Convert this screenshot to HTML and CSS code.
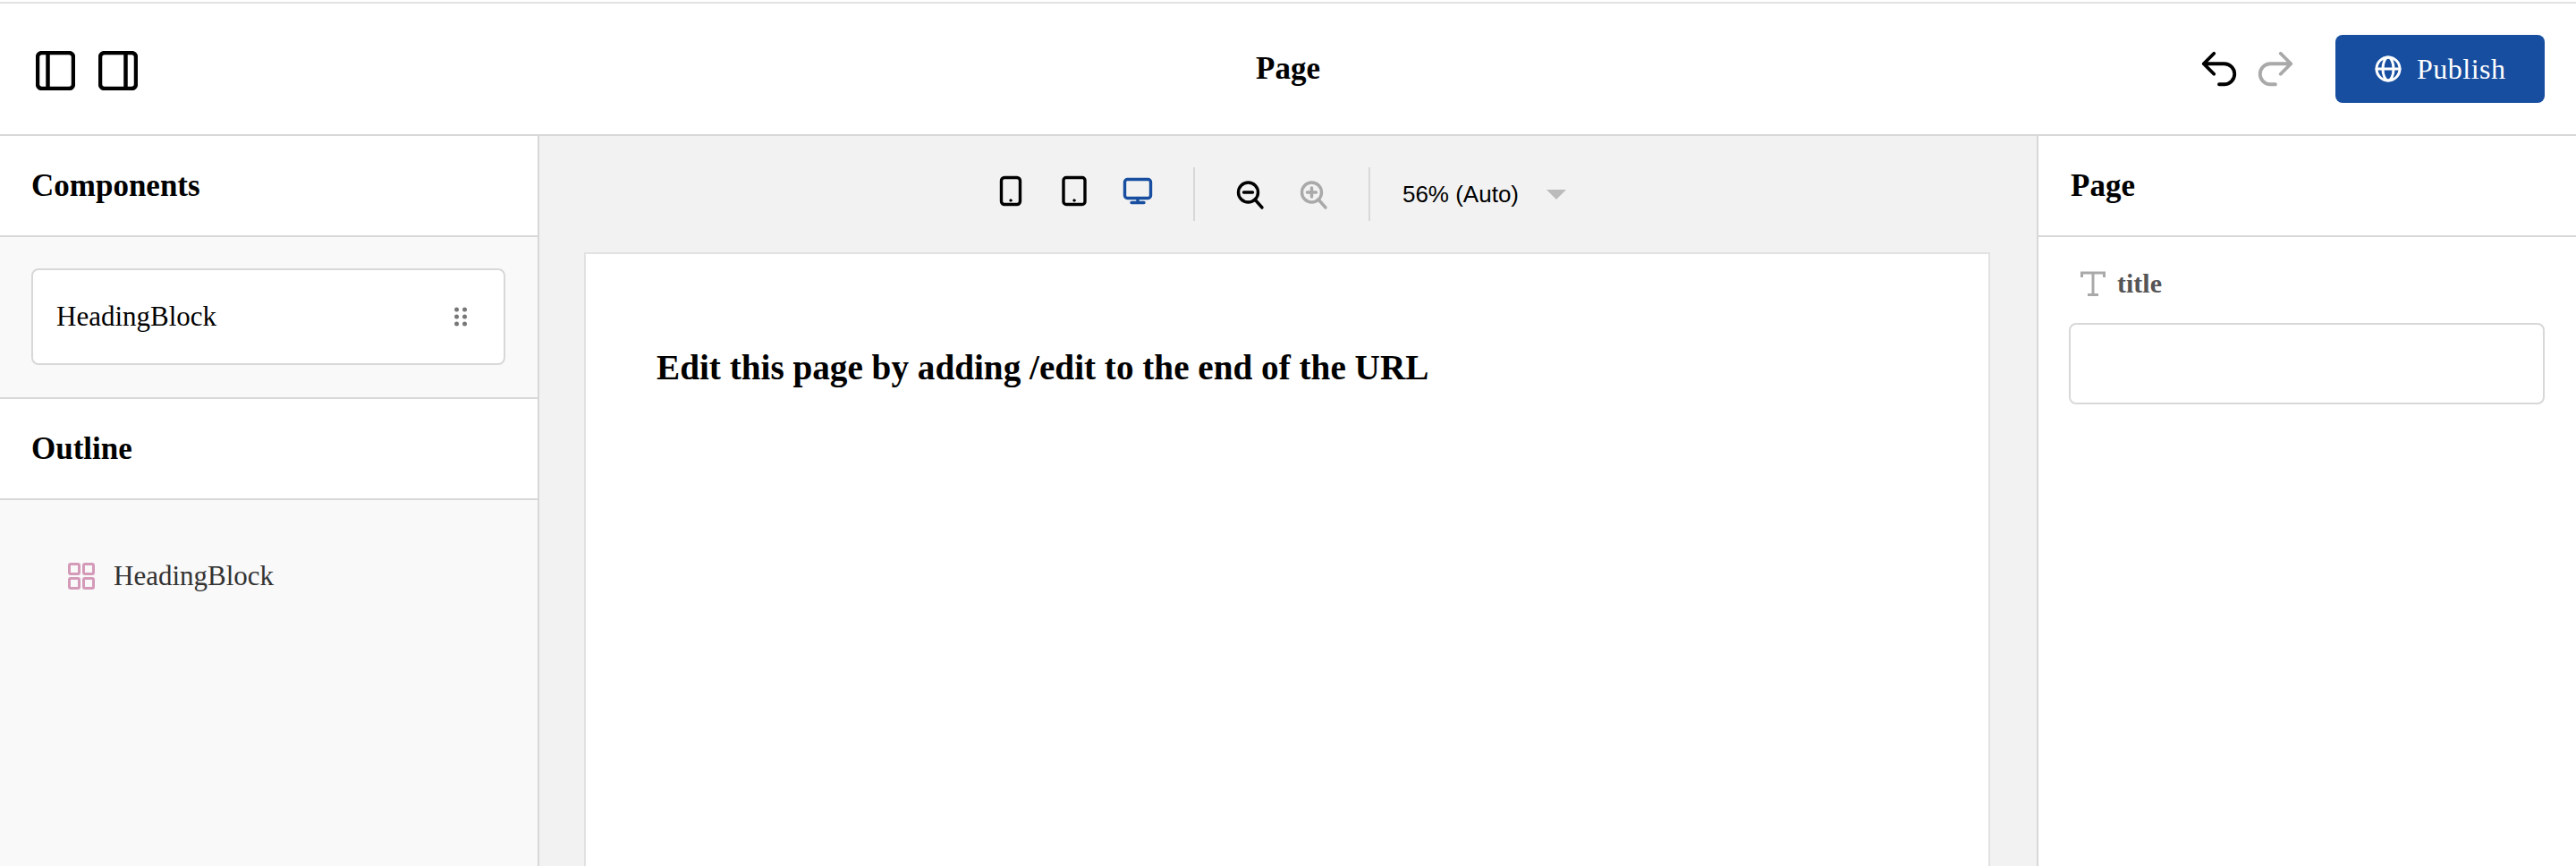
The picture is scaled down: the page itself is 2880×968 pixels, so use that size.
FILE: index.html
```
<!DOCTYPE html>
<html lang="en">
<head>
<meta charset="utf-8">
<title>Page</title>
<link rel="stylesheet" href="styles.css">
</head>
<body>
<div class="app">
  <header class="topbar">
    <div class="topbar-left">
      <button class="panel-btn" aria-label="Toggle left"><svg width="44" height="44" viewBox="0 0 44 44" class="ico-black"><rect x="2" y="2" width="40" height="40" rx="5"/><path d="M13.5 2v40"/></svg></button>
      <button class="panel-btn" aria-label="Toggle right"><svg width="44" height="44" viewBox="0 0 44 44" class="ico-black"><rect x="2" y="2" width="40" height="40" rx="5"/><path d="M30.5 2v40"/></svg></button>
    </div>
    <div class="topbar-title">Page</div>
    <div class="topbar-right">
      <svg class="ico-black history" width="46" height="46" viewBox="0 0 24 24"><path d="M9 15 3 9m0 0 6-6M3 9h12a6 6 0 0 1 0 12h-3"/></svg>
      <svg class="ico-gray history" width="46" height="46" viewBox="0 0 24 24"><path d="M15 15l6-6m0 0-6-6m6 6H9a6 6 0 0 0 0 12h3"/></svg>
      <button class="publish">
        <svg class="ico-white" width="30" height="30" viewBox="0 0 30 30"><circle cx="15" cy="15" r="13"/><ellipse cx="15" cy="15" rx="6" ry="13"/><path d="M2 15h26"/></svg>
        <span>Publish</span>
      </button>
    </div>
  </header>
  <div class="workspace">
    <aside class="left">
      <h2 class="panel-head">Components</h2>
      <div class="components">
        <div class="card">
          <span>HeadingBlock</span>
          <svg class="dots" width="14" height="22" viewBox="0 0 14 22"><circle cx="2.5" cy="3" r="2.5"/><circle cx="11.5" cy="3" r="2.5"/><circle cx="2.5" cy="11" r="2.5"/><circle cx="11.5" cy="11" r="2.5"/><circle cx="2.5" cy="19" r="2.5"/><circle cx="11.5" cy="19" r="2.5"/></svg>
        </div>
      </div>
      <h2 class="panel-head panel-head-top">Outline</h2>
      <div class="outline">
        <div class="outline-row">
          <svg class="ico-pink" width="30" height="30" viewBox="0 0 30 30"><rect x="1.5" y="1.5" width="11" height="11" rx="1.5"/><rect x="17.5" y="1.5" width="11" height="11" rx="1.5"/><rect x="1.5" y="17.5" width="11" height="11" rx="1.5"/><rect x="17.5" y="17.5" width="11" height="11" rx="1.5"/></svg>
          <span>HeadingBlock</span>
        </div>
      </div>
    </aside>
    <main class="canvas">
      <div class="toolbar">
        <button class="tool"><svg class="ico-black thin" width="48" height="48" viewBox="0 0 48 48"><rect x="13.5" y="5.5" width="21" height="30" rx="3.5"/><circle class="dot" cx="24" cy="31" r="1.2"/></svg></button>
        <button class="tool"><svg class="ico-black thin" width="48" height="48" viewBox="0 0 48 48"><rect x="12" y="5.5" width="24" height="30" rx="3"/><circle class="dot" cx="24" cy="31" r="1.2"/></svg></button>
        <button class="tool"><svg class="ico-blue thin" width="48" height="48" viewBox="0 0 48 48"><rect x="9.5" y="7.5" width="29" height="21" rx="3"/><path d="M24 28.5v5M17 33.5h14"/></svg></button>
        <span class="divider"></span>
        <button class="tool"><svg class="ico-black thin" width="48" height="48" viewBox="0 0 48 48"><circle cx="22.5" cy="22" r="11"/><path d="M30 30l8 9M17.5 22h10"/></svg></button>
        <button class="tool"><svg class="ico-gray thin" width="48" height="48" viewBox="0 0 48 48"><circle cx="22.5" cy="22" r="11"/><path d="M30 30l8 9M17.5 22h10M22.5 17v10"/></svg></button>
        <span class="divider"></span>
        <div class="zoom-select"><span>56% (Auto)</span><span class="caret"></span></div>
      </div>
      <div class="page">
        <h1 class="page-heading">Edit this page by adding /edit to the end of the URL</h1>
      </div>
    </main>
    <aside class="right">
      <h2 class="panel-head">Page</h2>
      <div class="fields">
        <label class="field-label">
          <svg class="ico-tgray" width="28" height="28" viewBox="0 0 28 28"><path d="M1.5 7V2h25v5M14 2v24.5M8 26.5h12"/></svg>
          <span>title</span>
        </label>
        <div class="input"></div>
      </div>
    </aside>
  </div>
</div>
</body>
</html>
```
FILE: styles.css
```
* { box-sizing: border-box; }
html, body { margin: 0; height: 100%; background: #fff; }
body { overflow: hidden; font-family: "Liberation Serif", "Times New Roman", serif; color: #000; }
button { padding: 0; border: 0; background: none; font: inherit; color: inherit; display: flex; }
svg { display: block; fill: none; stroke-linecap: round; stroke-linejoin: round; }

.app { height: 968px; padding-top: 2px; display: flex; flex-direction: column; }
.topbar { height: 150px; flex: none; border-top: 2px solid #e2e2e2; border-bottom: 2px solid #d8d8d8; display: grid; grid-template-columns: 1fr auto 1fr; align-items: center; }
.topbar-left { display: flex; gap: 26px; padding: 4px 0 0 40px; }
.topbar-title { font-size: 35px; font-weight: 700; }
.topbar-right { display: flex; align-items: center; justify-content: flex-end; padding-right: 35px; }

.ico-black { stroke: #000; stroke-width: 4.5; }
.ico-gray { stroke: #a9a9a9; stroke-width: 4; }
.ico-white { stroke: #fff; stroke-width: 3; }
.ico-blue { stroke: #174ea0; stroke-width: 3; }
.ico-pink { stroke: #d49ab8; stroke-width: 3; }
.ico-tgray { stroke: #a9a9a9; stroke-width: 3; stroke-linecap: butt; stroke-linejoin: miter; }
.thin { stroke-width: 3.4; }
.history { stroke-width: 2; }
.history + .history { margin-left: 17px; }
.dot { fill: #000; stroke-width: 1; }
.dots { fill: #777; }

.publish { margin-left: 44px; width: 234px; height: 76px; border-radius: 8px; background: #174ea0; color: #fff; align-items: center; padding-left: 44px; gap: 17px; font-size: 32px; letter-spacing: 0.5px; }

.workspace { flex: 1; min-height: 0; display: grid; grid-template-columns: 603px 1fr 603px; }
.left { border-right: 2px solid #d8d8d8; background: #f9f9f9; }
.right { border-left: 2px solid #d8d8d8; background: #fff; }
.panel-head { margin: 0; height: 113px; display: flex; align-items: center; padding-left: 35px; background: #fff; border-bottom: 2px solid #d8d8d8; font-size: 35px; font-weight: 700; }
.right .panel-head { padding-left: 36px; }
.panel-head-top { height: 115px; border-top: 2px solid #d8d8d8; }

.components { padding: 35px 36px 36px 35px; }
.card { height: 108px; border: 2px solid #d8d8d8; border-radius: 8px; background: #fff; display: flex; align-items: center; justify-content: space-between; padding: 0 41px 0 26px; font-size: 31px; }
.outline { padding: 67px 0 0 76px; }
.outline-row { display: flex; align-items: center; gap: 21px; font-size: 31px; color: #333; }

.canvas { background: #f2f2f2; padding: 0 52px 0 50px; min-width: 0; display: flex; flex-direction: column; }
.toolbar { height: 130px; flex: none; display: flex; align-items: center; justify-content: center; }
.tool { width: 71px; height: 60px; align-items: center; justify-content: center; }
.divider { width: 2px; height: 60px; background: #d8d8d8; margin: 0 26px; }
.zoom-select { margin-left: 10px; display: flex; align-items: center; gap: 31px; padding-right: 32px; font-family: "Liberation Sans", Arial, sans-serif; font-size: 26px; }
.caret { width: 0; height: 0; border-style: solid; border-width: 11px 11px 0; border-color: #bbb transparent transparent; }
.page { flex: 1; background: #fff; border: 2px solid #e2e2e2; border-bottom: 0; padding: 104px 79px 0; }
.page-heading { margin: 0; font-size: 39.2px; font-weight: 700; line-height: 46px; }

.fields { padding: 34px 35px 0 34px; }
.field-label { display: flex; align-items: center; gap: 13px; padding-left: 13px; height: 36px; margin-bottom: 26px; font-size: 30px; font-weight: 700; color: #555; }
.input { height: 91px; border: 2px solid #d8d8d8; border-radius: 8px; background: #fff; }
```
